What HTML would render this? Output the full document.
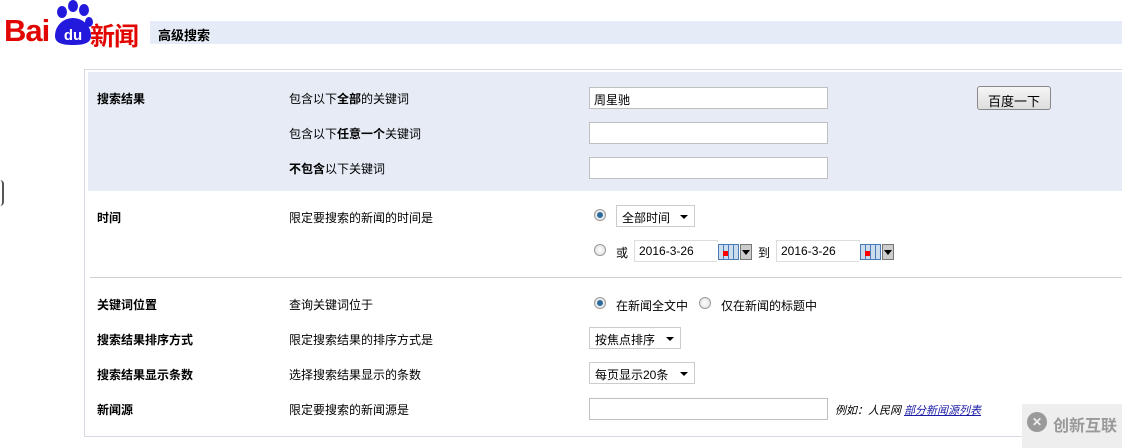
<!DOCTYPE html>
<html><head><meta charset="utf-8"><style>
*{margin:0;padding:0;box-sizing:border-box}
body{width:1122px;height:448px;background:#fff;position:relative;overflow:hidden;font-family:"Liberation Sans","Noto Sans CJK SC",sans-serif;font-size:12px;color:#000}
.a{position:absolute;white-space:nowrap}
.b{font-weight:bold}
.in{position:absolute;height:22px;border:1px solid #bfbfbf;background:#fff;font-size:12px;padding:3px 0 0 4px}
.sel{position:absolute;height:22px;border:1px solid #ccc;background:#fff;padding:3px 0 0 5px;font-size:12px}
.sel:after{content:"";position:absolute;right:6px;top:9px;border:4px solid transparent;border-top:4px solid #000;border-bottom:0}
.r{position:absolute;width:12px;height:12px;border-radius:50%;border:1px solid #999;background:radial-gradient(#fff,#ddd)}
.r.on:after{content:"";position:absolute;left:2px;top:2px;width:6px;height:6px;border-radius:50%;background:#2b6a9a}
</style></head><body>
<div class="a" style="left:4px;top:13px;font-size:31px;font-weight:bold;color:#e10602;letter-spacing:-1px;font-family:'Liberation Sans',sans-serif">Bai</div>
<svg class="a" style="left:52px;top:0" width="42" height="46"><g fill="#2319dc"><ellipse cx="10" cy="12" rx="5" ry="6"/><ellipse cx="21" cy="6" rx="5" ry="6"/><ellipse cx="32" cy="10" rx="5" ry="6"/><ellipse cx="37" cy="22" rx="4" ry="5"/><path d="M3 36c0-11 9-18 18-18s18 7 18 18c0 7-7 9-18 9S3 43 3 36z"/></g><text x="21" y="40" fill="#fff" font-size="15" font-weight="bold" text-anchor="middle" font-family="Liberation Sans">du</text></svg>
<div class="a" style="left:90px;top:17px;font-size:25px;font-weight:bold;color:#e10602;letter-spacing:-1px">新闻</div>
<div class="a" style="left:150px;top:21px;width:972px;height:23px;background:#e6ecf7"></div>
<div class="a b" style="left:158px;top:25px;font-size:13px">高级搜索</div>
<div class="a" style="left:84px;top:69px;width:1040px;height:368px;border:1px solid #d6dbe3;border-right:0"></div>
<div class="a" style="left:88px;top:72px;width:1034px;height:119px;background:#e6ebf6"></div>
<div class="a" style="left:90px;top:277px;width:1032px;height:1px;background:#d0d0d0"></div>
<div class="a" style="left:0;top:180px;width:4px;height:26px;border-right:2px solid #555;border-radius:0 10px 10px 0"></div>

<div class="a b" style="left:97px;top:90px">搜索结果</div>
<div class="a" style="left:289px;top:90px">包含以下<b>全部</b>的关键词</div>
<div class="a" style="left:289px;top:125px">包含以下<b>任意一个</b>关键词</div>
<div class="a" style="left:289px;top:160px"><b>不包含</b>以下关键词</div>
<div class="in" style="left:589px;top:87px;width:239px">周星驰</div>
<div class="in" style="left:589px;top:122px;width:239px"></div>
<div class="in" style="left:589px;top:157px;width:239px"></div>
<div class="a" style="left:977px;top:86px;width:74px;height:24px;border:1px solid #888;border-radius:3px;background:linear-gradient(#f6f6f6,#ddd);text-align:center;padding-top:4px;font-size:13px">百度一下</div>

<div class="a b" style="left:97px;top:209px">时间</div>
<div class="a" style="left:289px;top:209px">限定要搜索的新闻的时间是</div>
<div class="r on" style="left:594px;top:209px"></div>
<div class="sel" style="left:616px;top:205px;width:79px">全部时间</div>
<div class="r" style="left:594px;top:244px"></div>
<div class="a" style="left:616px;top:244px">或</div>
<div class="in" style="left:634px;top:240px;width:84px;border-color:#ddd">2016-3-26</div>
<div class="a" style="left:717px;top:242px;width:36px;height:20px;background:#fff"><div style="position:absolute;left:1px;top:2px;width:21px;height:16px;border:1px solid #4a7bb7;background:repeating-linear-gradient(90deg,#cde 0 4px,#4a7bb7 4px 5px)"></div><div style="position:absolute;left:6px;top:9px;width:5px;height:5px;background:red"></div><div style="position:absolute;left:23px;top:2px;width:12px;height:16px;background:#ccc;border:1px solid #777"></div><div style="position:absolute;left:25px;top:8px;border:4px solid transparent;border-top:5px solid #000"></div></div>
<div class="a" style="left:758px;top:244px">到</div>
<div class="in" style="left:776px;top:240px;width:84px;border-color:#ddd">2016-3-26</div>
<div class="a" style="left:859px;top:242px;width:36px;height:20px;background:#fff"><div style="position:absolute;left:1px;top:2px;width:21px;height:16px;border:1px solid #4a7bb7;background:repeating-linear-gradient(90deg,#cde 0 4px,#4a7bb7 4px 5px)"></div><div style="position:absolute;left:6px;top:9px;width:5px;height:5px;background:red"></div><div style="position:absolute;left:23px;top:2px;width:12px;height:16px;background:#ccc;border:1px solid #777"></div><div style="position:absolute;left:25px;top:8px;border:4px solid transparent;border-top:5px solid #000"></div></div>

<div class="a b" style="left:97px;top:296px">关键词位置</div>
<div class="a" style="left:289px;top:296px">查询关键词位于</div>
<div class="r on" style="left:594px;top:297px"></div>
<div class="a" style="left:616px;top:297px">在新闻全文中</div>
<div class="r" style="left:699px;top:297px"></div>
<div class="a" style="left:721px;top:297px">仅在新闻的标题中</div>

<div class="a b" style="left:97px;top:331px">搜索结果排序方式</div>
<div class="a" style="left:289px;top:331px">限定搜索结果的排序方式是</div>
<div class="sel" style="left:589px;top:327px;width:92px">按焦点排序</div>
<div class="a b" style="left:97px;top:366px">搜索结果显示条数</div>
<div class="a" style="left:289px;top:366px">选择搜索结果显示的条数</div>
<div class="sel" style="left:589px;top:362px;width:106px">每页显示20条</div>
<div class="a b" style="left:97px;top:401px">新闻源</div>
<div class="a" style="left:289px;top:401px">限定要搜索的新闻源是</div>
<div class="in" style="left:589px;top:398px;width:239px"></div>
<div class="a" style="left:835px;top:402px;font-style:italic;font-size:11px">例如：人民网 <span style="color:#1a1aa6;text-decoration:underline">部分新闻源列表</span></div>
<div class="a" style="left:1022px;top:404px;width:100px;height:44px;background:#eee"></div>
<div class="a" style="left:1027px;top:412px;width:20px;height:20px;border-radius:50%;background:#9a9a9a;color:#eee;font-weight:bold;text-align:center;line-height:20px">✕</div>
<div class="a" style="left:1053px;top:412px;font-size:16px;color:#999;font-weight:bold">创新互联</div>
</body></html>
